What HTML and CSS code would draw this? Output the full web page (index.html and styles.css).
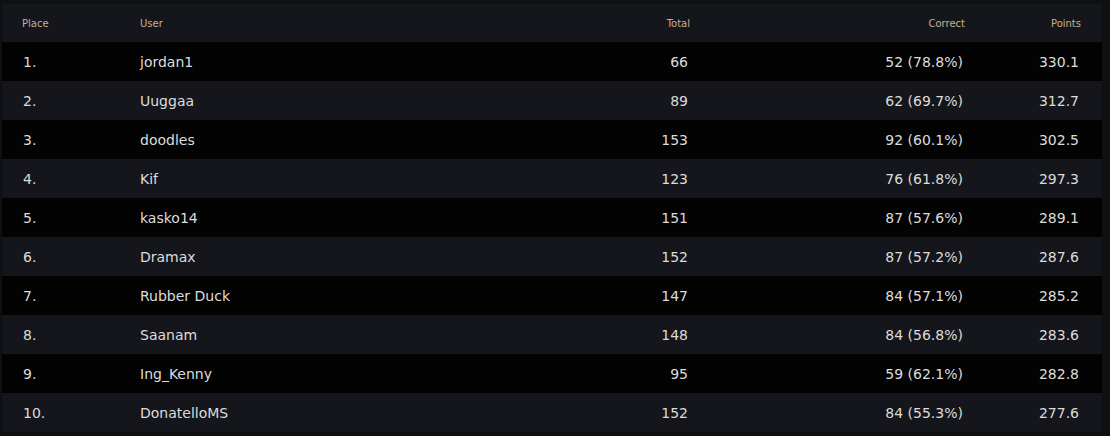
FILE: index.html
```html
<!DOCTYPE html>
<html>
<head>
<meta charset="utf-8">
<link rel="stylesheet" href="styles.css">
</head>
<body>
<div class="board">
  <div class="row head">
    <div class="c place">Place</div>
    <div class="c user">User</div>
    <div class="c num">Total</div>
    <div class="c num">Correct</div>
    <div class="c num last">Points</div>
  </div>
  <div class="row odd"><div class="c place">1.</div><div class="c user">jordan1</div><div class="c num">66</div><div class="c num">52 (78.8%)</div><div class="c num last">330.1</div></div>
  <div class="row even"><div class="c place">2.</div><div class="c user">Uuggaa</div><div class="c num">89</div><div class="c num">62 (69.7%)</div><div class="c num last">312.7</div></div>
  <div class="row odd"><div class="c place">3.</div><div class="c user">doodles</div><div class="c num">153</div><div class="c num">92 (60.1%)</div><div class="c num last">302.5</div></div>
  <div class="row even"><div class="c place">4.</div><div class="c user">Kif</div><div class="c num">123</div><div class="c num">76 (61.8%)</div><div class="c num last">297.3</div></div>
  <div class="row odd"><div class="c place">5.</div><div class="c user">kasko14</div><div class="c num">151</div><div class="c num">87 (57.6%)</div><div class="c num last">289.1</div></div>
  <div class="row even"><div class="c place">6.</div><div class="c user">Dramax</div><div class="c num">152</div><div class="c num">87 (57.2%)</div><div class="c num last">287.6</div></div>
  <div class="row odd"><div class="c place">7.</div><div class="c user">Rubber Duck</div><div class="c num">147</div><div class="c num">84 (57.1%)</div><div class="c num last">285.2</div></div>
  <div class="row even"><div class="c place">8.</div><div class="c user">Saanam</div><div class="c num">148</div><div class="c num">84 (56.8%)</div><div class="c num last">283.6</div></div>
  <div class="row odd"><div class="c place">9.</div><div class="c user">Ing_Kenny</div><div class="c num">95</div><div class="c num">59 (62.1%)</div><div class="c num last">282.8</div></div>
  <div class="row even"><div class="c place">10.</div><div class="c user">DonatelloMS</div><div class="c num">152</div><div class="c num">84 (55.3%)</div><div class="c num last">277.6</div></div>
</div>
</body>
</html>
```
FILE: styles.css
```css
html, body {
  background: #0f1013;
}
body {
  margin: 4px 8px 4px 2px;
  font-family: "DejaVu Sans", Verdana, sans-serif;
}
.board {
  width: 1100px;
}
.row {
  display: grid;
  grid-template-columns: 118px 390px 200px 275px 117px;
  align-items: center;
  height: 39px;
  color: #dcdcdc;
  font-size: 14px;
}
.row.head {
  height: 38px;
  background: #15161b;
  color: #c8b08a;
  font-size: 10px;
}
.row.odd {
  background: #030304;
}
.row.even {
  background: #15161b;
}
.c {
  white-space: nowrap;
}
.place, .user {
  padding-left: 20px;
}
.row:not(.head) .place {
  padding-left: 21px;
}
.num {
  text-align: right;
  padding-right: 22px;
}
.head .num {
  padding-right: 20px;
}
.num.last {
  padding-right: 23px;
}
.head .num.last {
  padding-right: 21px;
}
```
